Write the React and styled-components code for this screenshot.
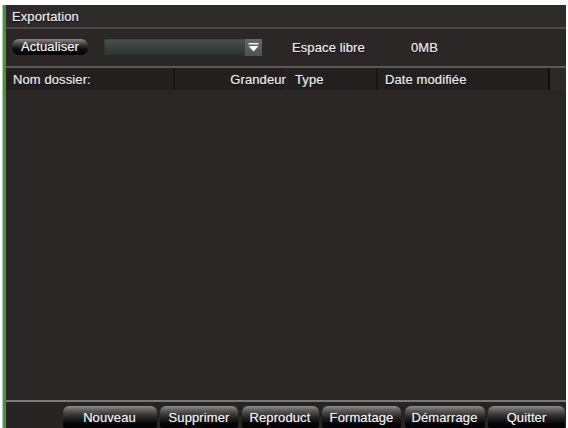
import styled, { createGlobalStyle } from "styled-components";

const GlobalStyle = createGlobalStyle`
  html, body {
    margin: 0;
    background: #ffffff;
    width: 568px;
    height: 428px;
    overflow: hidden;
  }
  * {
    box-sizing: border-box;
  }
`;

const Frame = styled.div`
  width: 568px;
  height: 428px;
  padding: 5px 0 0 3px;
  background: #ffffff;
  font-family: "Liberation Sans", Arial, sans-serif;
  font-size: 13px;
  font-weight: normal;
  letter-spacing: 0.1px;
  color: #e6e6e6;
`;

const Panel = styled.div`
  width: 563px;
  height: 423px;
  display: flex;
  flex-direction: column;
  background: #2b2727;
  border-left: 3px solid #4f8d48;
  box-shadow: -1px 0 0 #a9d6a3;
  text-shadow: 0 0 1px rgba(255, 255, 255, 0.55), 0 1px 1px #000;
`;

const TitleBar = styled.div`
  height: 24px;
  display: flex;
  align-items: center;
  padding-left: 6px;
  background: #2d2a2a;
  border-bottom: 2px solid #4b4848;
`;

const Toolbar = styled.div`
  height: 37px;
  display: flex;
  align-items: center;
  padding-left: 6px;
`;

const Actualiser = styled.button`
  width: 76px;
  height: 16px;
  margin-top: -2px;
  padding: 0;
  border: none;
  border-radius: 7px;
  font: inherit;
  letter-spacing: inherit;
  color: #f0f0f0;
  text-shadow: inherit;
  background: linear-gradient(#8a8a8a 0%, #444 30%, #0c0c0c 65%, #000 100%);
`;

const Dropdown = styled.div`
  width: 158px;
  height: 17px;
  margin-left: 16px;
  display: flex;
  justify-content: flex-end;
  background: linear-gradient(#4a5351, #363d3c 60%, #2e3332);
  box-shadow: inset 0 0 2px #1b1e1e;
`;

const ArrowBox = styled.div`
  width: 17px;
  display: flex;
  align-items: center;
  justify-content: center;
  background: linear-gradient(#636969, #4c5151);
`;

const Label = styled.span`
  width: ${(p) => p.$width || "auto"};
  margin-left: ${(p) => p.$gap || "0"};
`;

const Separator = styled.div`
  height: 2px;
  background: ${(p) => p.$color};
`;

const HeaderRow = styled.div`
  height: 22px;
  display: grid;
  grid-template-columns: 169px 113px 90px 172px 1fr;
  background: #221f1f;
`;

const HeaderCell = styled.div`
  display: flex;
  align-items: center;
  justify-content: ${(p) => (p.$right ? "flex-end" : "flex-start")};
  padding: 0 ${(p) => (p.$right ? "0" : "5px")} 0 ${(p) => (p.$right ? "0" : "7px")};
  border-right: 2px solid ${(p) => p.$line || "#171515"};
  background: ${(p) => p.$bg || "transparent"};
  white-space: nowrap;
`;

const Body = styled.div`
  flex: 1;
  background: #2b2727;
`;

const ButtonBar = styled.div`
  height: 26px;
  display: flex;
  justify-content: flex-end;
  align-items: flex-end;
  gap: 3.5px;
  padding-right: 1px;
  background: #272424;
`;

const BarButton = styled.button`
  width: ${(p) => p.$width}px;
  height: 22px;
  padding: 0;
  border: none;
  border-radius: 6px 6px 3px 3px;
  font: inherit;
  letter-spacing: inherit;
  color: #eeeeee;
  text-shadow: inherit;
  background: linear-gradient(#8c8c8c 0%, #575757 22%, #272727 50%, #070707 80%, #000 100%);
`;

function DownArrow() {
  return (
    <svg width="11" height="9" viewBox="0 0 11 9">
      <rect x="0.5" y="0" width="10" height="1.5" fill="#f2f2f2" />
      <polygon points="0.5,3 10.5,3 5.5,8.5" fill="#ffffff" />
    </svg>
  );
}

const buttons = [
  { label: "Nouveau", width: 94 },
  { label: "Supprimer", width: 78 },
  { label: "Reproduct", width: 77 },
  { label: "Formatage", width: 79 },
  { label: "Démarrage", width: 80 },
  { label: "Quitter", width: 77 },
];

export default function App() {
  return (
    <>
      <GlobalStyle />
      <Frame>
        <Panel>
          <TitleBar>Exportation</TitleBar>
          <Toolbar>
            <Actualiser>Actualiser</Actualiser>
            <Dropdown>
              <ArrowBox>
                <DownArrow />
              </ArrowBox>
            </Dropdown>
            <Label $width="119px" $gap="30px">
              Espace libre
            </Label>
            <Label>0MB</Label>
          </Toolbar>
          <Separator $color="#5c5959" />
          <HeaderRow>
            <HeaderCell>Nom dossier:</HeaderCell>
            <HeaderCell $right $line="#262323">
              Grandeur
            </HeaderCell>
            <HeaderCell>Type</HeaderCell>
            <HeaderCell $line="#0e0d0d">Date modifiée</HeaderCell>
            <HeaderCell $line="transparent" $bg="#2c2929" />
          </HeaderRow>
          <Body />
          <Separator $color="#7b7878" />
          <ButtonBar>
            {buttons.map((b) => (
              <BarButton key={b.label} $width={b.width}>
                {b.label}
              </BarButton>
            ))}
          </ButtonBar>
        </Panel>
      </Frame>
    </>
  );
}
